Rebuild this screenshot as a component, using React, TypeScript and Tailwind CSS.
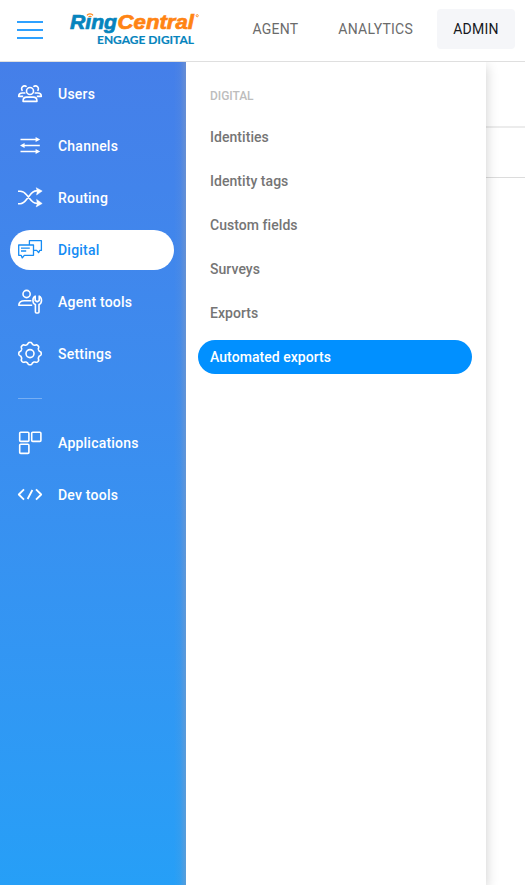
import React from 'react';

type IconProps = { children: React.ReactNode };

function Icon({ children }: IconProps) {
  return (
    <svg
      className="h-6 w-6 shrink-0 overflow-visible"
      viewBox="0 0 24 24"
      fill="none"
      stroke="currentColor"
      strokeWidth="1.6"
      strokeLinejoin="round"
    >
      {children}
    </svg>
  );
}

// Outline of the eight-lobed cog: broad lobes separated by narrow notches.
const cog =
  'M' +
  Array.from({ length: 128 }, (_, i) => {
    const a = (i / 128) * Math.PI * 2;
    const r = 10.3 + 0.95 * Math.tanh(1.8 * Math.cos(8 * a));
    return `${(12 + r * Math.sin(a)).toFixed(2)} ${(11.6 - r * Math.cos(a)).toFixed(2)}`;
  }).join('L') +
  'Z';

const icons = {
  users: (
    <Icon>
      <circle cx="12" cy="9" r="3.5" />
      <path d="M5.1 19.4v-.8c0-2.2 1.7-3.5 3.6-3.5h6.6c1.9 0 3.6 1.3 3.6 3.5v.8z" />
      <path d="M8.6 4.8A2.9 2.9 0 1 0 4.5 8.9M15.4 4.8a2.9 2.9 0 1 1 4.1 4.1" />
      <path d="M7.4 11H4.2C1.9 11 .7 12.3.7 14.4h4.5M16.6 11h3.2c2.3 0 3.5 1.3 3.5 3.4h-4.5" />
    </Icon>
  ),
  channels: (
    <Icon>
      <path d="M2.5 5.5H18M6 11.5h15.8M2.5 17.5H18" />
      <path
        d="M17.6 2.9v5.2l4.6-2.6zM6.6 8.9v5.2L2 11.5zM17.6 14.9v5.2l4.6-2.6z"
        fill="currentColor"
        stroke="none"
      />
    </Icon>
  ),
  routing: (
    <Icon>
      <path d="M0 5.2h2.2c3 0 4.6 1.4 6.5 3.7l3.1 3.9c1.9 2.6 3.5 4.5 6.6 4.5h1.5M0 17.7h2.2c3 0 4.6-1.8 6.5-4.4l3.1-4c1.9-2.7 3.5-4.4 6.6-4.4h1.5" />
      <path
        d="M18.2 1.7 24.2 5l-5.6 4 .7-4zM18.2 20.9l6-3.4-5.6-4.1.7 4.1z"
        fill="currentColor"
        stroke="currentColor"
        strokeWidth="0.5"
      />
    </Icon>
  ),
  digital: (
    <Icon>
      <g strokeWidth="1.3">
        <path d="M.7 7h14.8v10.3H6.3l-2 2.6-1.2-2.6H.7z" />
        <path d="M11.4 7V2.7h12v9.7h-1.6l-1.2 2.2-1.9-2.2h-3.2M3 10.2h8.8M3 13h5.2" />
      </g>
    </Icon>
  ),
  agent: (
    <Icon>
      <circle cx="8.6" cy="4" r="3.6" />
      <path d="M13.4 10.7H6.4C3 10.7.8 12.4.8 15.2h13.4" />
      <path d="M17.4 22V14.4c-1.7-.7-2.5-2-2.5-4 0-1.9.8-3.5 2.3-4.3v4.4l2 1.2 2-1.2V6.1c1.5.8 2.3 2.4 2.3 4.3 0 2-.8 3.3-2.5 4V22c0 .6-.4 1-1 1h-1.6c-.6 0-1-.4-1-1z" />
    </Icon>
  ),
  settings: (
    <Icon>
      <circle cx="12" cy="11.6" r="4" />
      <path d={cog} />
    </Icon>
  ),
  apps: (
    <Icon>
      <rect x="1.7" y="1.2" width="9.2" height="9.2" rx="1" />
      <rect x="13.7" y="1.2" width="9.2" height="9.2" rx="1" />
      <rect x="1.7" y="13.2" width="9.2" height="9.2" rx="1" />
    </Icon>
  ),
  dev: (
    <Icon>
      <path d="M6 6.3.8 11.5 6 16.7M18 6.3l5.2 5.2-5.2 5.2M14.4 7l-4.8 9" strokeWidth="1.8" />
    </Icon>
  ),
};

function Logo() {
  return (
    <svg className="h-9 w-[132px] overflow-visible" viewBox="0 0 132 36" role="img">
      <g
        fontFamily="'Liberation Sans', Arial, sans-serif"
        fontSize="20.5"
        fontWeight="700"
        fontStyle="italic"
        strokeWidth="0.7"
      >
        <text
          x="0"
          y="16.5"
          textLength="47"
          lengthAdjust="spacingAndGlyphs"
          fill="#0684bd"
          stroke="#0684bd"
        >
          Rıng
        </text>
        <text
          x="47.5"
          y="16.5"
          textLength="76.5"
          lengthAdjust="spacingAndGlyphs"
          fill="#ff8413"
          stroke="#ff8413"
        >
          Central
        </text>
      </g>
      <path
        d="M17 3.4c1.2-2 4.8-2 6 0M18.6 5c.7-1 2.2-1 2.8 0"
        fill="none"
        stroke="#ff8413"
        strokeWidth="1.2"
      />
      <circle cx="127.2" cy="3.7" r="1.1" fill="none" stroke="#ff8413" strokeWidth=".8" />
      <text
        x="27"
        y="31.9"
        fontFamily="Lato, sans-serif"
        fontSize="12.1"
        fontWeight="700"
        textLength="97"
        lengthAdjust="spacingAndGlyphs"
        fill="#0684bd"
        stroke="#0684bd"
        strokeWidth="0.15"
      >
        ENGAGE DIGITAL
      </text>
    </svg>
  );
}

type ItemProps = { icon: React.ReactNode; label: string; active?: boolean };

function NavItem({ icon, label, active }: ItemProps) {
  return (
    <a
      className={
        'flex h-10 items-center gap-4 rounded-full pl-2 text-sm font-medium tracking-[0.22px] ' +
        (active ? 'bg-white text-[#168cf4]' : 'text-white')
      }
    >
      {icon}
      <span>{label}</span>
    </a>
  );
}

const submenu = ['Identities', 'Identity tags', 'Custom fields', 'Surveys', 'Exports'];

export default function App() {
  return (
    <div className="flex h-[885px] w-[525px] flex-col overflow-hidden bg-white font-['Roboto',sans-serif]">
      <header className="relative z-20 flex h-[62px] shrink-0 items-start border-b border-[#dfdfdf] bg-white">
        <button className="mt-[21px] ml-[17px] flex w-[26px] flex-col gap-[6px]" aria-label="Menu">
          <span className="h-[2px] bg-[#0991ff]/85" />
          <span className="h-[2px] bg-[#0991ff]/85" />
          <span className="h-[2px] bg-[#0991ff]/85" />
        </button>
        <div className="mt-3 ml-[27px]">
          <Logo />
        </div>
        <nav className="mt-[9px] ml-auto flex h-10 items-center pr-[10px] text-sm tracking-[0.25px] text-[#6b6b6b]">
          <a className="mr-[40px]">AGENT</a>
          <a className="mr-[24px]">ANALYTICS</a>
          <a className="flex h-10 w-[78px] items-center justify-center rounded-[4px] bg-[#f5f6f9] text-[#16181d]">
            ADMIN
          </a>
        </nav>
      </header>
      <div className="flex min-h-0 flex-1">
        <aside className="relative z-10 flex w-[186px] shrink-0 bg-linear-to-b from-[#457fe9] to-[#269ff7]">
          <div className="flex w-[174px] flex-col gap-3 pt-3 pl-[10px]">
            <NavItem icon={icons.users} label="Users" />
            <NavItem icon={icons.channels} label="Channels" />
            <NavItem icon={icons.routing} label="Routing" />
            <NavItem icon={icons.digital} label="Digital" active />
            <NavItem icon={icons.agent} label="Agent tools" />
            <NavItem icon={icons.settings} label="Settings" />
            <div className="mt-3 mb-3 ml-2 h-px w-6 bg-white/30" />
            <NavItem icon={icons.apps} label="Applications" />
            <NavItem icon={icons.dev} label="Dev tools" />
          </div>
          <div className="ml-auto w-3 bg-linear-to-r from-transparent via-[#8b9cbc]/10 to-[#8b9cbc]/50" />
        </aside>
        <section className="relative flex w-[300px] shrink-0 flex-col bg-white px-3 pt-[25px] text-sm font-medium tracking-[0.05px] text-[#757575] shadow-[0_4px_12px_rgba(0,0,0,0.2)]">
          <h2 className="mb-[11px] pl-3 text-xs leading-[18px] tracking-[-0.05px] text-[#bdbdbd]">
            DIGITAL
          </h2>
          <div className="flex w-[274px] flex-col gap-[10px] pt-[4px]">
            {submenu.map((label) => (
              <a key={label} className="flex h-[34px] items-center pl-3">
                {label}
              </a>
            ))}
            <a className="flex h-[34px] items-center rounded-full bg-[#0190ff] pl-3 text-white">
              Automated exports
            </a>
          </div>
        </section>
        <main className="flex flex-1 flex-col">
          <div className="h-[66px] border-b-2 border-[#ececec]" />
          <div className="h-[50px] border-b border-[#dcdcdc]" />
        </main>
      </div>
    </div>
  );
}
